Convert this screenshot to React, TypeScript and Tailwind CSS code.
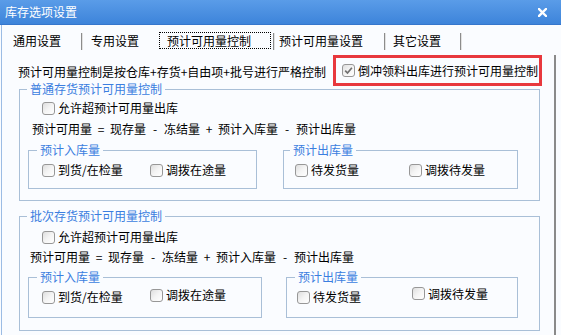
import React from "react"

const Box = ({ checked }: { checked?: boolean }) => (
  <span className="inline-flex h-[13px] w-[13px] shrink-0 items-center justify-center rounded-[3px] border border-[#979797] bg-linear-to-br from-[#dedede] via-[#f4f4f4] to-[#ffffff]">
    {checked && (
      <svg width="9" height="9" viewBox="0 0 9 9">
        <path d="M1.2 4.6 L3.5 7 L7.9 1.8" fill="none" stroke="#707070" strokeWidth="1.7" />
      </svg>
    )}
  </span>
)

const Check = ({
  label,
  checked,
  className = ""
}: {
  label: string
  checked?: boolean
  className?: string
}) => (
  <label className={`flex items-center gap-[3px] ${className}`}>
    <Box checked={checked} />
    <span>{label}</span>
  </label>
)

const Group = ({
  title,
  legendMl,
  className = "",
  children
}: {
  title: string
  legendMl: string
  className?: string
  children: React.ReactNode
}) => (
  <fieldset className={`border border-[#a9bfd7] ${className}`}>
    <legend className={`${legendMl} px-[3px] leading-[14px] text-[#3b7ee0]`}>{title}</legend>
    {children}
  </fieldset>
)

const Formula = ({ className = "" }: { className?: string }) => {
  const op = (o: string) => <span className="w-[18px] text-center">{o}</span>
  return (
    <div className={`flex h-[20px] items-center ${className}`}>
      <span>预计可用量</span>
      {op("=")}
      <span>现存量</span>
      {op("-")}
      <span>冻结量</span>
      {op("+")}
      <span>预计入库量</span>
      {op("-")}
      <span>预计出库量</span>
    </div>
  )
}

const Sep = ({ className = "" }: { className?: string }) => (
  <span className={`h-[17px] w-[2px] border-l border-r border-l-[#8c8c8c] border-r-[#e2e2e2] ${className}`} />
)

export default function App() {
  return (
    <div className="h-[335px] w-[561px] overflow-hidden bg-[#fafcff] text-[12px] text-black font-['Noto_Sans_CJK_SC','Noto_Sans',sans-serif]">
      {/* title bar */}
      <div className="flex h-[25px] items-center justify-between border-b border-[#3576cc] bg-linear-to-b from-[#5a9ce8] to-[#3d84da] pl-[5px] pr-[14px] text-white">
        <span className="leading-none">库存选项设置</span>
        <svg width="9" height="9" viewBox="0 0 9 9">
          <path d="M1 1 L8 8 M8 1 L1 8" stroke="#ffffff" strokeWidth="2.4" strokeLinecap="square" />
        </svg>
      </div>

      <div className="h-[310px] shadow-[inset_1px_0_0_#fafcff,inset_2px_0_0_#9cbce4]">
        {/* tabs */}
        <div className="flex h-[25px] items-end pl-[13px] leading-[17px]">
          <span className="mb-[1px]">通用设置</span>
          <Sep className="ml-[20px]" />
          <span className="mb-[1px] ml-[8px]">专用设置</span>
          <span className="mb-[1px] ml-[20px] h-[17px] w-[112px] border border-dotted border-black pl-[7px] leading-[15px]">
            预计可用量控制
          </span>
          <Sep className="ml-[2px]" />
          <span className="mb-[1px] ml-[4px]">预计可用量设置</span>
          <Sep className="ml-[21px]" />
          <span className="mb-[1px] ml-[7px]">其它设置</span>
          <Sep className="ml-[19px]" />
        </div>

        {/* tab page */}
        <div className="h-[285px] w-[556px] border-r-2 border-r-[#8a8a8a]">
          <div className="mt-[5px] flex h-[31px] items-center">
            <span className="ml-[18px] w-[315px] pt-[2px]">预计可用量控制是按仓库+存货+自由项+批号进行严格控制</span>
            <div className="flex h-[31px] w-[209px] items-center border-[3px] border-[#e8383d] pl-[6px]">
              <Check label="倒冲领料出库进行预计可用量控制" checked />
            </div>
          </div>

          <Group title="普通存货预计可用量控制" legendMl="ml-[7px]" className="ml-[19px] mt-[-4px] w-[521px]">
            <div className="pb-[11px] pt-[2px]">
              <Check label="允许超预计可用量出库" className="h-[20px] pl-[22px]" />
              <Formula className="h-[22px] pl-[12px]" />
              <div className="mt-[3px] flex">
                <Group title="预计入库量" legendMl="ml-[8px]" className="ml-[8px] w-[229px]">
                  <div className="flex h-[20px] items-center pl-[13px] mt-[3px] mb-[8px]">
                    <Check label="到货/在检量" className="w-[108px]" />
                    <Check label="调拨在途量" />
                  </div>
                </Group>
                <Group title="预计出库量" legendMl="ml-[6px]" className="ml-[26px] w-[235px]">
                  <div className="flex h-[20px] items-center pl-[11px] mt-[3px] mb-[8px]">
                    <Check label="待发货量" className="w-[114px]" />
                    <Check label="调拨待发量" />
                  </div>
                </Group>
              </div>
            </div>
          </Group>

          <Group title="批次存货预计可用量控制" legendMl="ml-[7px]" className="ml-[19px] mt-[8px] w-[521px]">
            <div className="pb-[12px] pt-[4px]">
              <Check label="允许超预计可用量出库" className="h-[20px] pl-[22px]" />
              <Formula className="pl-[10px]" />
              <div className="mt-[3px] flex">
                <Group title="预计入库量" legendMl="ml-[8px]" className="ml-[8px] w-[234px]">
                  <div className="flex h-[20px] items-center pl-[13px] mt-[3px] mb-[10px]">
                    <Check label="到货/在检量" className="w-[108px]" />
                    <Check label="调拨在途量" className="mb-[4px]" />
                  </div>
                </Group>
                <Group title="预计出库量" legendMl="ml-[8px]" className="ml-[24px] w-[232px]">
                  <div className="flex h-[20px] items-center pl-[10px] mt-[3px] mb-[10px]">
                    <Check label="待发货量" className="w-[115px]" />
                    <Check label="调拨待发量" className="mb-[7px]" />
                  </div>
                </Group>
              </div>
            </div>
          </Group>
        </div>
      </div>
    </div>
  )
}
